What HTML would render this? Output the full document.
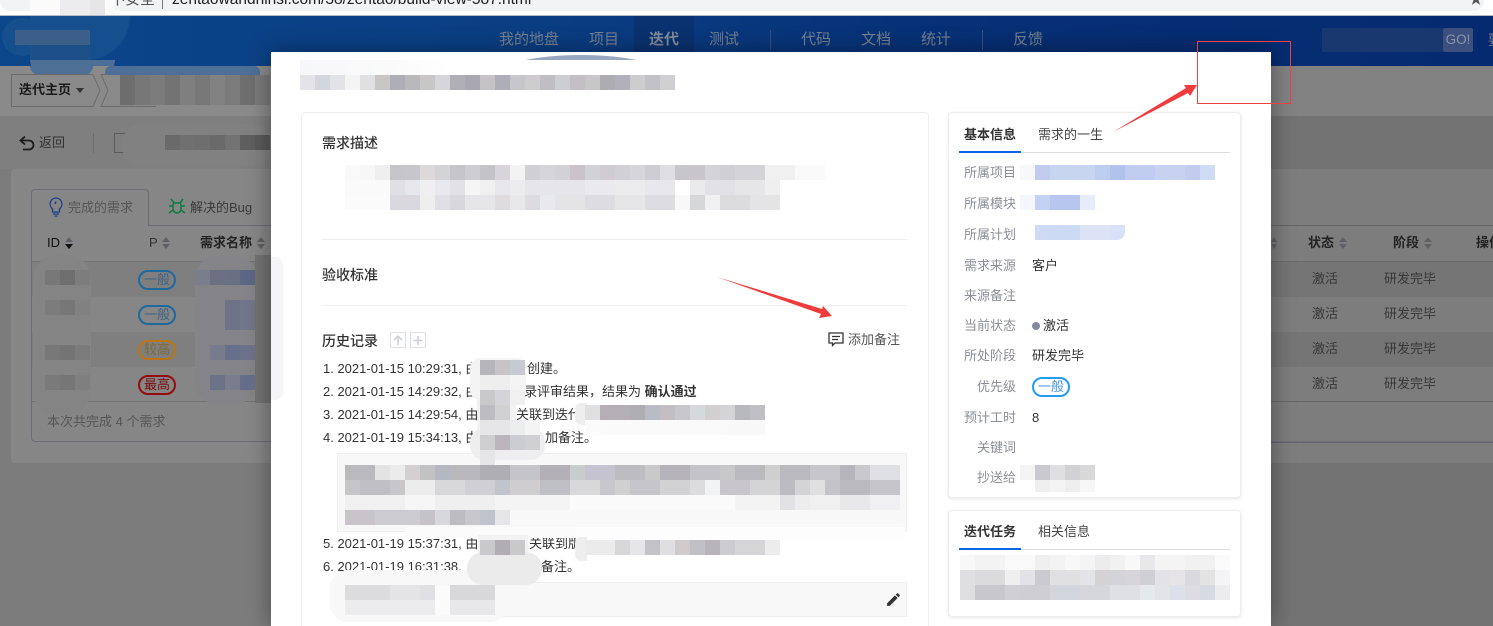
<!DOCTYPE html>
<html lang="zh"><head><meta charset="utf-8"><title>迭代</title>
<style>
html,body{margin:0;padding:0;width:1493px;height:626px;overflow:hidden}
body{position:relative;background:#7c7c7c;font:13px/20px "Liberation Sans","Noto Sans CJK SC",sans-serif;color:#333}
div{position:absolute}
.t{position:absolute;white-space:nowrap;line-height:20px}
.m{position:absolute;height:15px}
.nav{color:#75808f;font-size:15px;top:30px}
.lb{color:#8a8f99}
.v{color:#333}
.h{font-weight:500;color:#333;font-size:14px}
.pill{position:absolute;width:34px;height:16px;border:2px solid;border-radius:10px;font-size:13px;line-height:16px;text-align:center}
</style></head><body>
<div id="p" style="left:0;top:0;width:1493px;height:626px;overflow:hidden">
<!-- browser bar -->
<div style="left:0;top:0;width:1493px;height:15px;background:#fff"></div>
<div style="left:0;top:-10px;width:1484px;height:21px;background:#f1f3f4;border-radius:10px"></div>
<div style="left:0;top:15px;width:1493px;height:1px;background:#b8bcc2"></div>
<div class="t" style="left:172px;top:-10px;font-size:15.500px;color:#222">zentaowandhinsi.com/38/zentao/build-view-587.html</div>
<div class="t" style="left:110px;top:-10px;font-size:15px;color:#555">不安全</div>
<div style="left:162px;top:0;width:1px;height:9px;background:#777"></div>
<div style="left:30px;top:0;width:85px;height:15px;background:linear-gradient(90deg,#fbfbfb 0 30px,#ececee 0 60px,#e6e6e8 0 75px,#fafafa 0)"></div>
<div class="t" style="left:1469px;top:-11px;font-size:14px;color:#555">★</div>
<!-- top nav -->
<div style="left:0;top:16px;width:1493px;height:50px;background:linear-gradient(90deg,#0b458a 0,#0a3f84 500px,#072f75 1000px,#052a70 1493px)"></div>
<div style="left:634px;top:16px;width:60px;height:36px;background:#0a3270"></div>
<div class="t nav" style="left:499px">我的地盘</div>
<div class="t nav" style="left:589px">项目</div>
<div class="t nav" style="left:649px;font-weight:700;color:#808b9c">迭代</div>
<div class="t nav" style="left:709px">测试</div>
<div style="left:770px;top:30px;width:1px;height:20px;background:#3c5078"></div>
<div class="t nav" style="left:801px">代码</div>
<div class="t nav" style="left:861px">文档</div>
<div class="t nav" style="left:921px">统计</div>
<div style="left:982px;top:30px;width:1px;height:20px;background:#3c5078"></div>
<div class="t nav" style="left:1013px">反馈</div>
<div style="left:1322px;top:28px;width:121px;height:24px;background:#1a3870"></div>
<div class="t" style="left:1443px;top:28px;width:30px;height:24px;background:#3c5080;border-radius:2px;color:#8a93a6;font-size:13.500px;line-height:24px;text-align:center">GO!</div>
<div class="t" style="left:1488px;top:30px;color:#75808f;font-size:14px">要</div>
<!-- blob logo -->
<div style="left:30px;top:16px;width:100px;height:44px;background:#164f8e;border-radius:0 0 50px 30px"></div>
<div style="left:2px;top:18px;width:40px;height:38px;background:#164f8e;border-radius:50%"></div>
<div style="left:15px;top:30px;width:75px;height:15px;background:#3c5f8a"></div>
<div style="left:30px;top:45px;width:60px;height:15px;background:#1d4f88"></div>
<div style="left:30px;top:60px;width:85px;height:15px;background:#4d6f96;border-radius:0 0 36px 36px"></div>
<!-- subnav -->
<div style="left:0;top:66px;width:271px;height:50px;background:#8a8a8a"></div>
<div style="left:1271px;top:66px;width:222px;height:50px;background:#828282"></div>
<div style="left:0;top:116px;width:271px;height:53px;background:#7f7f7f"></div>
<div style="left:1271px;top:116px;width:222px;height:53px;background:#737373"></div>
<div style="left:30px;top:66px;width:63px;height:9px;background:#4d6f96;border-radius:0 0 30px 30px"></div>
<div style="left:105px;top:66px;width:155px;height:9px;background:#4d6f98;border-radius:6px 6px 0 0"></div>
<svg style="position:absolute;left:0;top:66px" width="271" height="50"><path d="M11.500 8.500H93l7 16-7 16H11.500zM108 8.500h-7l7 16-7 16h55" fill="none" stroke="#6d6d6d"/></svg>
<div class="t" style="left:19px;top:80px;color:#1a1a1a;font-weight:700;font-size:13px">迭代主页</div>
<svg style="position:absolute;left:76px;top:88px" width="9" height="6"><path d="M0 0h8L4 5z" fill="#333"/></svg>
<div class="m" style="left:120px;top:75px;height:30px;width:150px;background:linear-gradient(90deg,#6d6d6d 0 15px,#777 0 30px,#7b7b7b 0 45px,#737373 0 60px,#7f7f7f 0 75px,#787878 0 90px,#828282 0 105px,#7b7b7b 0 120px,#6f6f6f 0 135px,#7a7a7a 0)"></div>
<!-- toolbar -->
<svg style="position:absolute;left:18px;top:134px" width="18" height="18" viewBox="0 0 18 18"><path d="M7 2.500L2.500 6.500 7 10.500M3 6.500h8a4.500 4.500 0 0 1 0 9H5" fill="none" stroke="#1c1c1c" stroke-width="1.800"/></svg>
<div class="t" style="left:39px;top:133px;color:#333">返回</div>
<div style="left:93px;top:133px;width:1px;height:20px;background:#6e6e6e"></div>
<div style="left:114px;top:133px;width:14px;height:18px;border:1px solid #5c5c5c;border-right:0"></div>
<div style="left:122px;top:124px;width:150px;height:42px;background:#818181;border-radius:20px"></div>
<div class="m" style="left:165px;top:135px;width:105px;background:linear-gradient(90deg,#6a6a6a 0 15px,#707070 0 30px,#6e6e6e 0 45px,#6a6a6a 0 60px,#737373 0 75px,#5f5f5f 0 90px,#5a5a5a 0)"></div>
<!-- panel -->
<div style="left:11px;top:169px;width:1482px;height:294px;background:#868686;border-radius:4px"></div>
<div style="left:1271px;top:169px;width:222px;height:294px;background:#7d7d7d"></div>
<div style="left:1271px;top:463px;width:222px;height:163px;background:#737373"></div>
<div style="left:31px;top:225px;width:1462px;height:217px;border:1px solid #6c6c74;border-right:0;border-radius:0 0 0 4px;box-sizing:border-box"></div>
<div style="left:31px;top:189px;width:118px;height:37px;background:#868686;border:1px solid #6c6c74;border-bottom:0;border-radius:4px 4px 0 0;box-sizing:border-box"></div>
<div style="left:1271px;top:225px;width:222px;height:1px;background:#656565"></div>
<svg style="position:absolute;left:49px;top:197px" width="14" height="20" viewBox="0 0 14 20"><path d="M7 1a6 6 0 0 1 3.500 10.800V15H3.500v-3.200A6 6 0 0 1 7 1zM4 17h6M5.500 19h3M7 4.500L6 7" fill="none" stroke="#1c3f8f" stroke-width="1.300"/></svg>
<div class="t" style="left:68px;top:198px;color:#565656">完成的需求</div>
<svg style="position:absolute;left:168px;top:198px" width="18" height="17" viewBox="0 0 18 17"><path d="M6 5h6a3 3 0 0 1 1 2v4a4 4 0 0 1-8 0V7a3 3 0 0 1 1-2zM6 5L3 1M12 5l3-4M5 8H1M13 8h4M5 12l-4 3M13 12l4 3" fill="none" stroke="#0d7a40" stroke-width="1.500"/></svg>
<div class="t" style="left:190px;top:198px;color:#3a3a3a">解决的Bug</div>
<!-- rows -->
<div style="left:32px;top:262px;width:239px;height:35px;background:#7f7f7f"></div>
<div style="left:32px;top:332px;width:239px;height:35px;background:#7f7f7f"></div>
<div style="left:1271px;top:262px;width:222px;height:35px;background:#757575"></div>
<div style="left:1271px;top:332px;width:222px;height:35px;background:#757575"></div>
<div style="left:32px;top:261px;width:239px;height:1px;background:#747474"></div>
<div style="left:32px;top:401px;width:239px;height:1px;background:#727272"></div>
<div style="left:1271px;top:261px;width:222px;height:1px;background:#6a6a6a"></div>
<div style="left:1271px;top:401px;width:222px;height:1px;background:#666"></div>
<div style="left:1271px;top:442px;width:222px;height:1px;background:#656570"></div>
<!-- table head -->
<div class="t" style="left:47px;top:233px;color:#111">ID</div>
<div class="t" style="left:149px;top:233px;color:#333">P</div>
<div class="t" style="left:200px;top:233px;color:#222;font-weight:700">需求名称</div>
<div class="t" style="left:1308px;top:233px;color:#222;font-weight:700">状态</div>
<div class="t" style="left:1393px;top:233px;color:#222;font-weight:700">阶段</div>
<div class="t" style="left:1476px;top:233px;color:#222;font-weight:700">操作</div>
<svg style="position:absolute;left:0;top:235px" width="1493" height="16"><g fill="#5f5f66"><path d="M65 7l4-5 4 5zM162 7l4-5 4 5zM162 9h8l-4 5zM257 7l4-5 4 5zM257 9h8l-4 5zM1339 7l4-5 4 5zM1339 9h8l-4 5zM1424 7l4-5 4 5zM1424 9h8l-4 5zM1271 7l3-5 3 5zM1271 9h6l-3 5z"/></g><path d="M65 9h8l-4 5z" fill="#111"/></svg>
<!-- table mask blobs -->
<div style="left:33px;top:255px;width:58px;height:160px;background:#848484;border-radius:24px"></div>
<div style="left:195px;top:256px;width:62px;height:148px;background:#848488;border-radius:22px"></div>
<div class="m" style="left:45px;top:270px;width:45px;background:linear-gradient(90deg,#787878 0 15px,#6f6f6f 0 30px,#7d7d7d 0)"></div>
<div class="m" style="left:45px;top:300px;width:45px;background:linear-gradient(90deg,#7c7c7c 0 15px,#777 0 30px,#818181 0)"></div>
<div class="m" style="left:45px;top:345px;width:45px;background:linear-gradient(90deg,#787878 0 15px,#747474 0 30px,#7b7b7b 0)"></div>
<div class="m" style="left:45px;top:375px;width:45px;background:linear-gradient(90deg,#7a7a7a 0 15px,#767676 0 30px,#7f7f7f 0)"></div>
<div class="pill" style="left:138px;top:270px;border-color:#1e6a9e;color:#3f6484">一般</div>
<div class="pill" style="left:138px;top:305px;border-color:#1e6a9e;color:#3f6484">一般</div>
<div class="pill" style="left:138px;top:340px;border-color:#bd7510;color:#806a35">较高</div>
<div class="pill" style="left:138px;top:375px;border-color:#940c0c;color:#7c0c0c">最高</div>
<div class="m" style="left:195px;top:270px;width:75px;background:linear-gradient(90deg,#7a7d8c 0 15px,#6b7083 0 30px,#697084 0 45px,#5b6785 0 60px,#606983 0)"></div>
<div class="m" style="left:225px;top:300px;width:45px;height:30px;background:linear-gradient(90deg,#6e7388 0 15px,#71768a 0 30px,#72768a 0)"></div>
<div class="m" style="left:210px;top:345px;width:60px;background:linear-gradient(90deg,#787b8c 0 15px,#67708b 0 30px,#6d728a 0 45px,#70758a 0)"></div>
<div class="m" style="left:210px;top:375px;width:60px;background:linear-gradient(90deg,#6c7288 0 15px,#797d8d 0 30px,#656f8b 0 45px,#626b89 0)"></div>
<div style="left:255px;top:255px;width:16px;height:148px;background:#737373"></div>
<div class="t" style="left:47px;top:412px;color:#565656;font-size:13px">本次共完成 4 个需求</div>
<div class="t" style="left:1312px;top:269px;color:#383838">激活</div><div class="t" style="left:1384px;top:269px;color:#383838">研发完毕</div>
<div class="t" style="left:1312px;top:304px;color:#383838">激活</div><div class="t" style="left:1384px;top:304px;color:#383838">研发完毕</div>
<div class="t" style="left:1312px;top:339px;color:#383838">激活</div><div class="t" style="left:1384px;top:339px;color:#383838">研发完毕</div>
<div class="t" style="left:1312px;top:374px;color:#383838">激活</div><div class="t" style="left:1384px;top:374px;color:#383838">研发完毕</div>
<!-- modal -->
<div style="left:271px;top:52px;width:1000px;height:574px;background:#fff;box-shadow:0 0 22px rgba(0,0,0,.4)"></div>
<div style="left:497px;top:52px;width:168px;height:8px;overflow:hidden"><div style="left:0;top:3px;width:168px;height:40px;background:#98a8c2;border-radius:50%"></div></div>
<div style="left:271px;top:257px;width:12px;height:143px;background:#f3f5f8;border-radius:0 8px 8px 0"></div>
<div class="m" style="left:300px;top:60px;width:150px;background:linear-gradient(90deg,#f6f7f9,#fafafa 60%,#fff)"></div>
<div class="m" style="left:300px;top:75px;width:375px;background:linear-gradient(90deg,#e4e4e8 0 15px,#d4d6de 0 30px,#e2e3e7 0 45px,#f4f4f4 0 60px,#e0e0e2 0 75px,#c9c6c6 0 90px,#adaeb6 0 105px,#b9b9bc 0 120px,#c9c6c8 0 135px,#d5d6da 0 150px,#b1afb6 0 165px,#a9a7b0 0 180px,#c5c2c5 0 195px,#adaeb8 0 210px,#c6c6cb 0 225px,#cfcccf 0 240px,#bfbfc3 0 255px,#ccced1 0 270px,#c3bfc4 0 285px,#c9c6ca 0 300px,#adadb1 0 315px,#b0b1bb 0 330px,#cdcdcf 0 345px,#c2c2c6 0 360px,#d0d0d3 0)"></div>
<!-- left card -->
<div style="left:301px;top:112px;width:628px;height:520px;background:#fff;border:1px solid #eee;border-radius:4px;box-sizing:border-box"></div>
<div class="t h" style="left:322px;top:133px">需求描述</div>
<div class="m" style="left:345px;top:165px;width:480px;background:linear-gradient(90deg,#f9f9f9 0 15px,#f7f7f7 0 30px,#efefef 0 45px,#c6c6ca 0 60px,#c6c7cb 0 75px,#dcd9da 0 90px,#d4d4d6 0 105px,#c5c5ca 0 120px,#cdcdd2 0 135px,#c4c3c8 0 150px,#d8d5da 0 165px,#f3f3f4 0 180px,#cfcfd4 0 195px,#d5d5d9 0 210px,#d2d1d6 0 225px,#cac4ca 0 240px,#d0d2d8 0 255px,#d0ccd2 0 270px,#d0d0d6 0 285px,#d6d6da 0 300px,#cdcdd3 0 315px,#dedfe3 0 330px,#c8c6cb 0 360px,#d4d4d8 0 375px,#d0cfd4 0 390px,#d4d4d8 0 420px,#f0f0f1 0 450px,#f9f9f9 0)"></div>
<div class="m" style="left:345px;top:180px;width:435px;background:linear-gradient(90deg,#fafafa 0 45px,#e0e0e4 0 60px,#e6e7ec 0 75px,#efeff1 0 90px,#e8e9ee 0 105px,#e2e2e6 0 120px,#f5f5f5 0 135px,#f0f0f1 0 150px,#e8e8ec 0 165px,#ececef 0 180px,#e6e6ea 0 240px,#eaeaee 0 270px,#ececef 0 300px,#e8e8ec 0 330px,#fff 0 345px,#eaeaed 0 360px,#e2e2e6 0 390px,#e6e6e9 0 420px,#efeff1 0)"></div>
<div class="m" style="left:345px;top:195px;width:435px;background:linear-gradient(90deg,#fbfbfb 0 45px,#d8d8de 0 75px,#eeeeef 0 90px,#dfe0e6 0 105px,#d8d8dc 0 120px,#e6e6e8 0 150px,#dfdcdf 0 165px,#e8e8ea 0 180px,#dbdbe0 0 195px,#e8e9ee 0 210px,#e4e4e7 0 240px,#dddde1 0 270px,#e6e6e9 0 300px,#dddde1 0 330px,#f8f8f8 0 345px,#d5d7d9 0 360px,#f0f0f2 0 375px,#dcdcdf 0 405px,#e4e4e6 0)"></div>
<div style="left:322px;top:239px;width:585px;height:1px;background:#eee"></div>
<div class="t h" style="left:322px;top:265px">验收标准</div>
<div style="left:322px;top:305px;width:585px;height:1px;background:#eee"></div>
<div class="t h" style="left:322px;top:331px">历史记录</div>
<svg style="position:absolute;left:390px;top:332px" width="38" height="17"><rect x=".5" y=".5" width="15" height="15" fill="#fff" stroke="#dde0e6"/><rect x="20.500" y=".5" width="15" height="15" fill="#fff" stroke="#dde0e6"/><path d="M8 13V4M4 8l4-4 4 4M28 4v9M23.500 8.500h9" fill="none" stroke="#c8cfd8" stroke-width="1.500"/></svg>
<svg style="position:absolute;left:828px;top:332px" width="16" height="15" viewBox="0 0 16 15"><path d="M1 1h14v10H7l-2.500 2.500V11H1zM4 4.500h8M4 7.500h6" fill="none" stroke="#333" stroke-width="1.300"/></svg>
<div class="t" style="left:848px;top:330px;color:#555">添加备注</div>
<div class="t" style="left:323px;top:359px">1. 2021-01-15 10:29:31, 由</div>
<div class="t" style="left:527px;top:359px">创建。</div>
<div class="t" style="left:323px;top:382px">2. 2021-01-15 14:29:32, 由</div>
<div class="t" style="left:524px;top:382px">录评审结果，结果为 <b>确认通过</b></div>
<div class="t" style="left:323px;top:405px">3. 2021-01-15 14:29:54, 由</div>
<div class="t" style="left:516px;top:405px">关联到迭代</div>
<div class="t" style="left:323px;top:428px">4. 2021-01-19 15:34:13, 由</div>
<div class="t" style="left:545px;top:428px">加备注。</div>
<div class="t" style="left:323px;top:534px">5. 2021-01-19 15:37:31, 由</div>
<div class="t" style="left:529px;top:534px">关联到版</div>
<div class="t" style="left:323px;top:557px">6. 2021-01-19 16:31:38,</div>
<div class="t" style="left:541px;top:557px">备注。</div>
<!-- history mosaics -->
<div style="left:337px;top:453px;width:568px;height:77px;background:#f8f8f8;border:1px solid #eee"></div>
<div style="left:337px;top:582px;width:568px;height:33px;background:#f8f8f8;border:1px solid #eee"></div>
<div style="left:405px;top:527px;width:220px;height:11px;background:#fbfbfb;border-radius:4px"></div>
<div style="left:575px;top:527px;width:330px;height:13px;background:#fdfdfd;border-radius:4px"></div>
<div style="left:330px;top:570px;width:178px;height:52px;background:#f8f8f8;border-radius:18px"></div>
<div style="left:470px;top:358px;width:56px;height:42px;background:#f4f4f4;border-radius:10px"></div>
<div style="left:477px;top:398px;width:39px;height:32px;background:#f2f2f2"></div>
<div style="left:470px;top:428px;width:75px;height:32px;background:#eeeef0;border-radius:14px"></div>
<div style="left:478px;top:535px;width:50px;height:26px;background:#f2f2f2"></div>
<div style="left:467px;top:552px;width:75px;height:33px;background:#ebebec;border-radius:16px"></div>
<div style="left:575px;top:403px;width:12px;height:22px;background:#eeeeef;border-radius:6px 0 0 6px"></div>
<div style="left:575px;top:537px;width:12px;height:24px;background:#eeeeef;border-radius:6px 0 0 6px"></div>
<div class="m" style="left:480px;top:360px;width:45px;background:linear-gradient(90deg,#b5b5ba 0 15px,#c7c3c7 0 30px,#c8cad3 0)"></div>
<div class="m" style="left:480px;top:375px;width:45px;background:linear-gradient(90deg,#eeeeef 0 30px,#f4f4f4 0)"></div>
<div class="m" style="left:480px;top:390px;width:45px;background:linear-gradient(90deg,#c9c9cc 0 15px,#d4d4d8 0 30px,#f0f0f1 0)"></div>
<div class="m" style="left:480px;top:405px;width:30px;background:linear-gradient(90deg,#bdbdc1 0 15px,#d1d1d3 0)"></div>
<div class="m" style="left:480px;top:420px;width:60px;background:linear-gradient(90deg,#e6e6e8 0 30px,#ecedee 0 45px,#f4f4f4 0)"></div>
<div class="m" style="left:480px;top:435px;width:60px;background:linear-gradient(90deg,#cfcfd2 0 15px,#bab6bb 0 30px,#cccdd3 0 45px,#d0d0d3 0)"></div>
<div class="m" style="left:480px;top:450px;width:15px;background:#e6e6e8"></div>
<div class="m" style="left:345px;top:465px;width:555px;background:linear-gradient(90deg,#bababe 0 30px,#e3e3e5 0 45px,#ebebec 0 60px,#d4d0d2 0 75px,#c2c2c4 0 90px,#b5b7c1 0 105px,#b9b9bd 0 135px,#afafb3 0 165px,#c4c4c9 0 195px,#b2b0b6 0 225px,#c9cccd 0 240px,#c4c3cf 0 270px,#bcbcc1 0 300px,#c9c9cc 0 315px,#b6b4ba 0 345px,#c4c4c8 0 375px,#c8c8ca 0 390px,#b9b9be 0 420px,#cfcfd0 0 435px,#b9b9be 0 465px,#c6c6cb 0 495px,#b7b5bc 0 510px,#c9c9cd 0 525px,#dfe0e3 0)"></div>
<div class="m" style="left:345px;top:480px;width:555px;background:linear-gradient(90deg,#c6c6ca 0 15px,#c0c0c4 0 45px,#c8c6ca 0 60px,#ececed 0 90px,#d8d8da 0 120px,#d0d0d4 0 150px,#c1c3cd 0 165px,#cfcdcf 0 195px,#bfbfc6 0 225px,#d8d8da 0 255px,#c7c7cc 0 270px,#d0d0d2 0 285px,#c5c5ca 0 315px,#d2d2d4 0 345px,#dcdcde 0 360px,#f2f3f4 0 375px,#c8c6ca 0 405px,#d4d4d6 0 435px,#bcbcc0 0 450px,#d4d4d6 0 465px,#e0e0e2 0 480px,#c4c4c8 0 495px,#b9b9be 0 525px,#c6c6ca 0)"></div>
<div class="m" style="left:345px;top:495px;width:555px;background:linear-gradient(90deg,#f0f0f1 0 60px,#f6f6f6 0 90px,#efeff0 0 150px,#f4f4f4 0 225px,#fafafa 0 390px,#f3f3f4 0 435px,#e2e2e4 0 450px,#ededef 0 465px,#f0f0f0 0 495px,#e8e8ea 0 525px,#f0f0f2 0)"></div>
<div class="m" style="left:345px;top:510px;width:165px;background:linear-gradient(90deg,#c9c4ca 0 30px,#cbcbd0 0 75px,#c5c2c8 0 90px,#d8d8dc 0 105px,#bdbdc1 0 120px,#c8c8cc 0 135px,#c0c3cb 0 150px,#e6e6e8 0)"></div>
<div class="m" style="left:585px;top:405px;width:180px;background:linear-gradient(90deg,#e0e0e2 0 15px,#b3afb5 0 45px,#aeaeb3 0 60px,#b9bcc5 0 75px,#c2bec4 0 90px,#c8c8cc 0 105px,#d5d8dd 0 120px,#d2cfd1 0 135px,#d4d4d6 0 150px,#b8b8bf 0 165px,#c0c0c4 0 180px,#e2e2e4 0)"></div>
<div class="m" style="left:585px;top:420px;width:180px;background:linear-gradient(90deg,#fbfbfb,#f8f8f9)"></div>
<div class="m" style="left:585px;top:540px;width:195px;background:linear-gradient(90deg,#ebebec 0 30px,#d8d8da 0 45px,#e6e6e8 0 60px,#c2c2c8 0 75px,#dfdfe1 0 90px,#cfcbcd 0 105px,#c0c0c5 0 120px,#b7b5ba 0 135px,#cdcdd1 0 150px,#d5d5d8 0 180px,#ececed 0)"></div>
<div class="m" style="left:480px;top:540px;width:45px;background:linear-gradient(90deg,#c9c9cc 0 15px,#b0aeb3 0 30px,#c9c9cb 0)"></div>
<div class="m" style="left:345px;top:585px;width:150px;background:linear-gradient(90deg,#dcdcde 0 45px,#e4e4e6 0 75px,#e0e0e4 0 90px,#fbfbfb 0 105px,#d8d8da 0)"></div>
<div class="m" style="left:345px;top:600px;width:150px;background:linear-gradient(90deg,#ececee 0 90px,#fbfbfb 0 105px,#e8e8ea 0)"></div>
<svg style="position:absolute;left:885px;top:591px" width="17" height="17" viewBox="0 0 24 24"><path d="M3 17.250V21h3.750L17.810 9.940l-3.750-3.750zM20.710 7.040a1 1 0 0 0 0-1.410l-2.340-2.340a1 1 0 0 0-1.410 0l-1.830 1.830 3.750 3.750z" fill="#333"/></svg>
<!-- right card 1 -->
<div style="left:948px;top:112px;width:293px;height:386px;background:#fff;border:1px solid #eee;border-radius:4px;box-sizing:border-box;box-shadow:0 1px 3px rgba(0,0,0,.1)"></div>
<div class="t" style="left:964px;top:125px;font-weight:700;color:#333">基本信息</div>
<div class="t" style="left:1038px;top:125px;color:#444">需求的一生</div>
<div style="left:959px;top:152px;width:271px;height:1px;background:#ddd"></div>
<div style="left:959px;top:151px;width:62px;height:2px;background:#0c64eb"></div>
<div class="t lb" style="left:964px;top:163px">所属项目</div>
<div class="t lb" style="left:964px;top:194px">所属模块</div>
<div class="t lb" style="left:964px;top:225px">所属计划</div>
<div class="t lb" style="left:964px;top:256px">需求来源</div>
<div class="t lb" style="left:964px;top:286px">来源备注</div>
<div class="t lb" style="left:964px;top:316px">当前状态</div>
<div class="t lb" style="left:964px;top:346px">所处阶段</div>
<div class="t lb" style="left:977px;top:377px">优先级</div>
<div class="t lb" style="left:964px;top:408px">预计工时</div>
<div class="t lb" style="left:977px;top:438px">关键词</div>
<div class="t lb" style="left:977px;top:468px">抄送给</div>
<div class="t v" style="left:1032px;top:256px">客户</div>
<div style="left:1032px;top:322px;width:8px;height:8px;border-radius:50%;background:#838a9d"></div>
<div class="t v" style="left:1043px;top:316px">激活</div>
<div class="t v" style="left:1032px;top:346px">研发完毕</div>
<div class="pill" style="left:1032px;top:377px;border-color:#229df2;color:#4b95e8">一般</div>
<div class="t v" style="left:1032px;top:408px">8</div>
<div class="m" style="left:1020px;top:165px;width:195px;background:linear-gradient(90deg,#f8f8fc 0 15px,#c1cbee 0 30px,#c5d5f2 0 45px,#c8d5f0 0 75px,#bccdf0 0 90px,#b0c3ec 0 105px,#c0cdf0 0 135px,#c6d2f0 0 165px,#c2cdee 0 180px,#cedcf5 0)"></div>
<div class="m" style="left:1020px;top:195px;width:75px;background:linear-gradient(90deg,#f6f7fc 0 15px,#c3d1f3 0 30px,#b6c6ef 0 60px,#e6ecf9 0)"></div>
<div class="m" style="left:1035px;top:225px;width:90px;background:linear-gradient(90deg,#cfdaf4 0 15px,#cddaf4 0 45px,#dce3f6 0 75px,#d8e1f7 0);border-radius:0 0 8px 0"></div>
<div class="m" style="left:1020px;top:465px;width:75px;background:linear-gradient(90deg,#f4f4f5 0 15px,#c9c9cf 0 30px,#dfdfe2 0 45px,#d2d2d6 0 60px,#d8d8db 0)"></div>
<div class="m" style="left:1035px;top:480px;width:60px;height:12px;background:linear-gradient(90deg,#efeff0 0 15px,#f4f4f5 0 30px,#eee 0 45px,#f7f7f7 0)"></div>
<!-- right card 2 -->
<div style="left:948px;top:510px;width:293px;height:107px;background:#fff;border:1px solid #eee;border-radius:4px;box-sizing:border-box;box-shadow:0 1px 3px rgba(0,0,0,.1)"></div>
<div class="t" style="left:964px;top:522px;font-weight:700;color:#333">迭代任务</div>
<div class="t" style="left:1038px;top:522px;color:#444">相关信息</div>
<div style="left:959px;top:549px;width:271px;height:1px;background:#ddd"></div>
<div style="left:959px;top:548px;width:62px;height:2px;background:#0c64eb"></div>
<div class="m" style="left:960px;top:555px;width:270px;background:linear-gradient(90deg,#f8f8f8 0 15px,#f3f3f4 0 45px,#f9f9f9 0 75px,#efeff0 0 90px,#f3f3f4 0 105px,#f8f8f8 0 120px,#f4f4f5 0 135px,#ececee 0 150px,#f1f1f2 0 165px,#f8f8f8 0 180px,#e8e8ea 0 195px,#f4f4f5 0 225px,#f1f1f2 0 255px,#fbfbfb 0)"></div>
<div class="m" style="left:960px;top:570px;width:270px;background:linear-gradient(90deg,#dfdfe1 0 15px,#dbdbde 0 45px,#efefef 0 60px,#e3e3e7 0 75px,#cbcbcf 0 90px,#e0e0e2 0 120px,#e3e4e7 0 135px,#d5d2d5 0 150px,#d3d3d8 0 165px,#d7d5da 0 180px,#cfcfd4 0 195px,#e3e3e7 0 210px,#e6e4e6 0 225px,#dadade 0 240px,#e3e3e4 0 255px,#f4f4f6 0)"></div>
<div class="m" style="left:960px;top:585px;width:270px;background:linear-gradient(90deg,#dedee0 0 15px,#c8c7cc 0 45px,#d0d0d4 0 60px,#cfcfd3 0 90px,#d3d5dc 0 120px,#d6d7dc 0 150px,#dfe0e4 0 180px,#e6e9ec 0 195px,#e3e4e8 0 210px,#dce0ea 0 225px,#dcdce2 0 240px,#d7dae2 0 255px,#ececef 0)"></div>
<!-- annotations -->
<svg style="position:absolute;left:0;top:0" width="1493" height="626">
<rect x="1197.500" y="41.500" width="93" height="62" fill="none" stroke="#ee4040"/>
<path d="M1113 132L1186 88l-2-3h13l-7 11-2-3z" fill="#f03c3c"/>
<path d="M717 277L822 309l1-3 9 10-13 2 2-4z" fill="#f03c3c"/>
</svg>
</div>
</body></html>
